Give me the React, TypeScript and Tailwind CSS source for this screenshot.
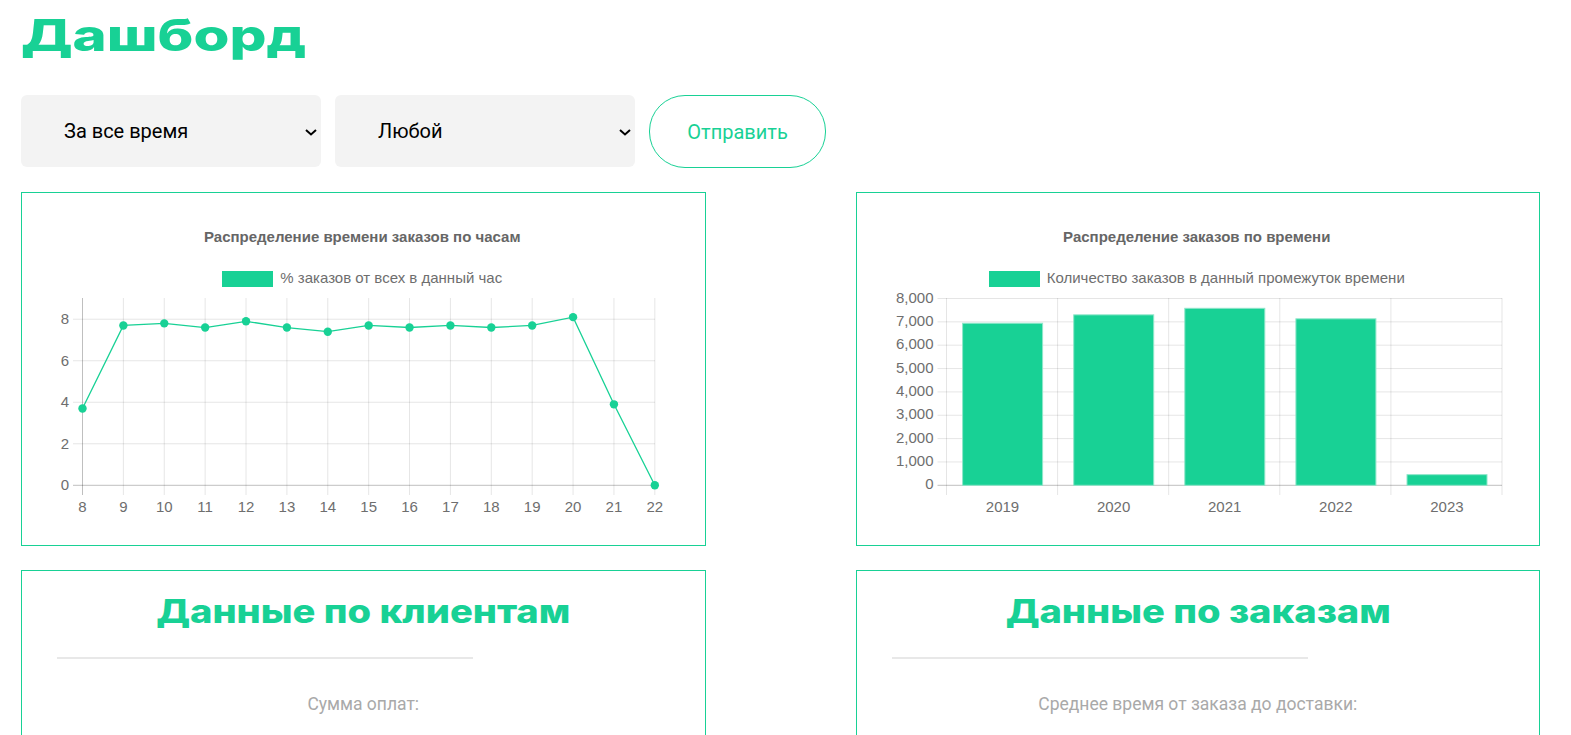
import React from 'react';

const GREEN = '#18d195';

const hours = [8, 9, 10, 11, 12, 13, 14, 15, 16, 17, 18, 19, 20, 21, 22];
const percents = [3.7, 7.7, 7.8, 7.6, 7.9, 7.6, 7.4, 7.7, 7.6, 7.7, 7.6, 7.7, 8.1, 3.9, 0];
const years = [2019, 2020, 2021, 2022, 2023];
const orders = [6940, 7300, 7580, 7130, 455];

const AXIS_FONT = '"Liberation Sans", Arial, sans-serif';

// svg viewBox uses page coordinates so the numbers can be read off the screenshot
const LineChart = () => {
  const x = (i: number) => 82.5 + i * 40.88;
  const y = (v: number) => 485.3 - v * 20.76;
  const points = percents.map((v, i) => `${x(i)},${y(v)}`).join(' ');
  return (
    <svg className="block mt-[3px]" width="682.5" height="255" viewBox="22 290 682.5 255">
      {[2, 4, 6, 8].map((v) => (
        <line key={v} x1="73" x2="655" y1={y(v)} y2={y(v)} stroke="#000" strokeOpacity="0.1" />
      ))}
      {hours.map((h, i) => (
        <line key={h} x1={x(i)} x2={x(i)} y1="298" y2="495" stroke="#000" strokeOpacity={i === 0 ? 0.25 : 0.1} />
      ))}
      <line x1="73" x2="655" y1={y(0)} y2={y(0)} stroke="#000" strokeOpacity="0.25" />
      {[0, 2, 4, 6, 8].map((v) => (
        <text key={v} x="69" y={y(v) + 5} textAnchor="end" fontSize="15" fill="#6e6e6e" fontFamily={AXIS_FONT}>{v}</text>
      ))}
      {hours.map((h, i) => (
        <text key={h} x={x(i)} y="512" textAnchor="middle" fontSize="15" fill="#6e6e6e" fontFamily={AXIS_FONT}>{h}</text>
      ))}
      <polyline points={points} fill="none" stroke={GREEN} strokeWidth="1.3" />
      {percents.map((v, i) => (
        <circle key={i} cx={x(i)} cy={y(v)} r="4.2" fill={GREEN} />
      ))}
    </svg>
  );
};

const BarChart = () => {
  const x = (i: number) => 946 + i * 111.1;
  const y = (v: number) => 485.3 - (v / 1000) * 23.35;
  return (
    <svg className="block mt-[3px]" width="682.5" height="255" viewBox="856.5 290 682.5 255">
      {[1, 2, 3, 4, 5, 6, 7, 8].map((v) => (
        <line key={v} x1="937" x2="1501.5" y1={y(v * 1000)} y2={y(v * 1000)} stroke="#000" strokeOpacity="0.1" />
      ))}
      {[0, 1, 2, 3, 4, 5].map((i) => (
        <line key={i} x1={x(i)} x2={x(i)} y1="298" y2="495" stroke="#000" strokeOpacity="0.1" />
      ))}
      <line x1="937" x2="1501.5" y1={y(0)} y2={y(0)} stroke="#000" strokeOpacity="0.25" />
      {orders.map((v, i) => (
        <rect key={i} x={x(i) + 16.1} y={y(v)} width="80" height={y(0) - y(v)} fill={GREEN} stroke="#8fe6ca" strokeWidth="1" />
      ))}
      {[0, 1, 2, 3, 4, 5, 6, 7, 8].map((v) => (
        <text key={v} x="933" y={y(v * 1000) + 4} textAnchor="end" fontSize="15" fill="#6e6e6e" fontFamily={AXIS_FONT}>
          {v === 0 ? '0' : `${v},000`}
        </text>
      ))}
      {years.map((year, i) => (
        <text key={year} x={x(i) + 56} y="512" textAnchor="middle" fontSize="15" fill="#6e6e6e" fontFamily={AXIS_FONT}>{year}</text>
      ))}
    </svg>
  );
};

const ChartCard = ({ title, legend, children }: { title: string; legend: string; children: React.ReactNode }) => (
  <div className="h-[354px] border border-[#18d195] pt-[36px] font-['Liberation_Sans',Arial,sans-serif]">
    <div className="pr-[2px] text-center text-[15px] leading-4 font-bold text-[#666]">{title}</div>
    <div className="mt-[26px] flex h-4 items-center justify-center gap-[7px] pr-[2px] text-[15px] text-[#6e6e6e]">
      <span className="h-4 w-[51px] bg-[#18d195]"></span>
      <span className="-mt-px">{legend}</span>
    </div>
    {children}
  </div>
);

const InfoCard = ({ title, label }: { title: string; label: string }) => (
  <div className="h-[300px] border border-[#18d195] pt-[21px]">
    <h2 className="scale-x-[1.19] text-center font-['Inter',sans-serif] text-[32px] leading-[40px] font-extrabold text-[#18d195]">{title}</h2>
    <div className="mt-[25px] ml-[35px] h-[2px] w-[416px] bg-[#e8e8e8]"></div>
    <p className="mt-[34px] text-center font-['Roboto',sans-serif] text-[17.5px] leading-[22px] text-[#a9a9a9]">{label}</p>
  </div>
);

const FilterSelect = ({ value }: { value: string }) => (
  <div className="relative h-[72px] w-[300px]">
    <select className="h-full w-full appearance-none rounded-md bg-[#f3f3f3] pl-[43px] text-black">
      <option>{value}</option>
    </select>
    <svg className="pointer-events-none absolute top-[34px] right-[4px]" width="12" height="7" viewBox="0 0 12 7" fill="none">
      <path d="M1 1l5 4.5L11 1" stroke="#000" strokeWidth="2" />
    </svg>
  </div>
);

export default function App() {
  return (
    <div className="h-screen overflow-hidden bg-white pl-[21px] pr-[31px]">
      <h1 className="origin-left scale-x-[1.32] pt-[5px] pb-[1px] font-['Inter',sans-serif] text-[44px] leading-[60px] font-extrabold text-[#18d195]">Дашборд</h1>

      <form className="mt-[29px] flex gap-[14px] font-['Roboto',sans-serif] text-[20px]">
        <FilterSelect value="За все время" />
        <FilterSelect value="Любой" />
        <button type="button" className="h-[73px] w-[177px] rounded-[36px] border border-[#18d195] bg-white text-[#18d195]">Отправить</button>
      </form>

      <div className="mt-[24px] grid grid-cols-2 gap-x-[150px] gap-y-[24px]">
        <ChartCard title="Распределение времени заказов по часам" legend="% заказов от всех в данный час">
          <LineChart />
        </ChartCard>
        <ChartCard title="Распределение заказов по времени" legend="Количество заказов в данный промежуток времени">
          <BarChart />
        </ChartCard>
        <InfoCard title="Данные по клиентам" label="Сумма оплат:" />
        <InfoCard title="Данные по заказам" label="Среднее время от заказа до доставки:" />
      </div>
    </div>
  );
}
